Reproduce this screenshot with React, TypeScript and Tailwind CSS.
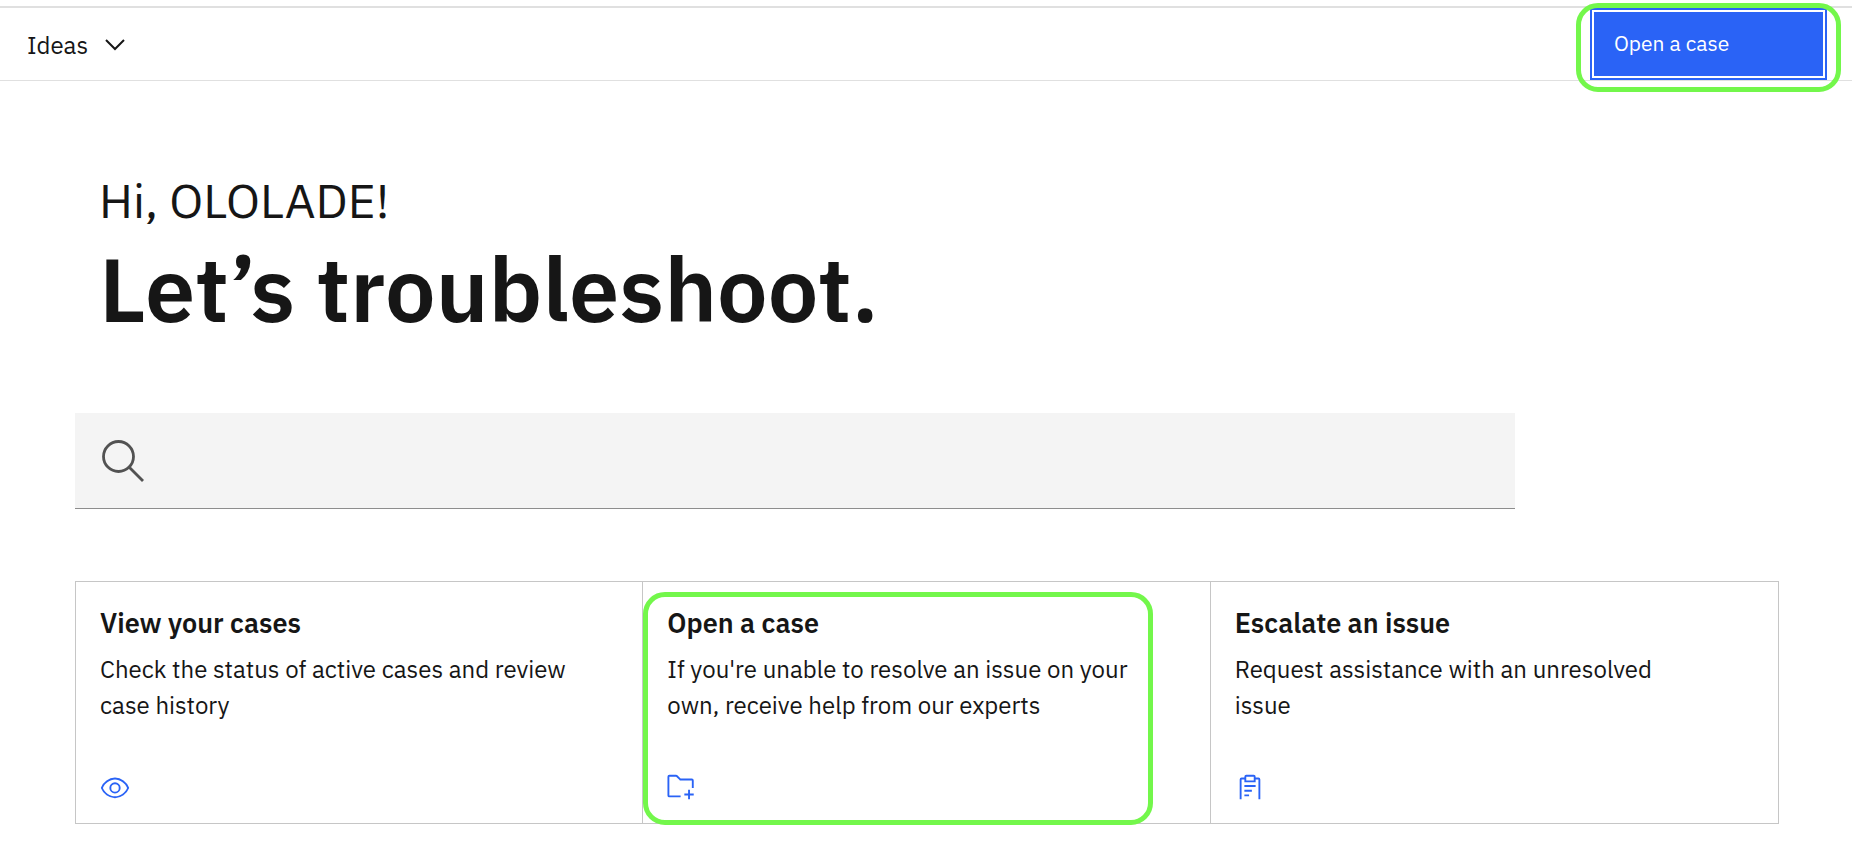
import type { ReactNode } from 'react';

function CardIcon({ viewBox, children }: { viewBox: string; children: ReactNode }) {
  return (
    <svg viewBox={viewBox} className="size-[30px] fill-[#2a63f6]" aria-hidden="true">
      {children}
    </svg>
  );
}

const viewIcon = (
  <CardIcon viewBox="0 -2 32 32">
    <path d="M30.94,15.66A16.69,16.69,0,0,0,16,5,16.69,16.69,0,0,0,1.06,15.66a1,1,0,0,0,0,.68A16.69,16.69,0,0,0,16,27,16.69,16.69,0,0,0,30.94,16.34,1,1,0,0,0,30.94,15.66ZM16,25c-5.3,0-10.9-3.93-12.93-9C5.1,10.93,10.7,7,16,7s10.9,3.93,12.93,9C26.9,21.07,21.3,25,16,25Z" />
    <path d="M16,10a6,6,0,1,0,6,6A6,6,0,0,0,16,10Zm0,10a4,4,0,1,1,4-4A4,4,0,0,1,16,20Z" />
  </CardIcon>
);

const folderAddIcon = (
  <CardIcon viewBox="1.5 0 32 32">
    <path d="M26,20H24v4H20v2h4v4h2V26h4V24H26Z" />
    <path d="M28,8H16L12.6,4.6A2,2,0,0,0,11.2,4H4A2,2,0,0,0,2,6V26a2,2,0,0,0,2,2H16V26H4V6h7.2l3.4,3.4.6.6H28v8h2V10A2,2,0,0,0,28,8Z" />
  </CardIcon>
);

const reportIcon = (
  <CardIcon viewBox="0 -2 32 32">
    <path d="M10,13H22v2H10Zm0,5h8v2H10Zm0,5h5v2H10Z" />
    <path d="M25,5H22V4a2,2,0,0,0-2-2H12a2,2,0,0,0-2,2V5H7A2,2,0,0,0,5,7V28H7V7h3v3H22V7h3V28h2V7A2,2,0,0,0,25,5ZM12,4h8V8H12Z" />
  </CardIcon>
);

const cards = [
  {
    title: 'View your cases',
    text: 'Check the status of active cases and review case history',
    icon: viewIcon,
    marked: false,
  },
  {
    title: 'Open a case',
    text: "If you're unable to resolve an issue on your own, receive help from our experts",
    icon: folderAddIcon,
    marked: true,
  },
  {
    title: 'Escalate an issue',
    text: 'Request assistance with an unresolved issue',
    icon: reportIcon,
    marked: false,
  },
];

export default function App() {
  return (
    <div className="bg-white pt-1.5 pb-5 font-['IBM_Plex_Sans',Roboto,sans-serif] text-[#161616] antialiased">
      <header className="flex h-[75px] items-center justify-between border-t-2 border-b border-[#e0e0e0] pr-[25px] pl-[27px]">
        <button type="button" className="flex items-center gap-[17px] pt-0.5 text-2xl">
          Ideas
          <svg viewBox="0 0 20 12" className="h-3 w-5 fill-none stroke-current stroke-2" aria-hidden="true">
            <path d="M1 1L10 10L19 1" />
          </svg>
        </button>
        <div className="relative">
          <button
            type="button"
            className="block h-[72px] w-[237px] border-2 border-[#2a63f6] bg-[#2a63f6] pl-[22px] text-left text-[21px] text-white inset-ring-2 inset-ring-white"
          >
            Open a case
          </button>
          <span className="pointer-events-none absolute -top-[5px] -right-[14px] -bottom-3 -left-[14px] rounded-[22px] border-[5px] border-[#73f74b]" />
        </div>
      </header>

      <main className="pr-[73px] pl-[75px]">
        <h1 className="pt-[89px] pl-6">
          <span className="block text-5xl leading-[60px]">Hi, OLOLADE!</span>
          <span className="block text-[90px] leading-[118px] font-semibold">Let’s troubleshoot.</span>
        </h1>

        <label className="mt-[65px] flex h-24 w-full max-w-[1440px] items-center gap-4 border-b border-[#8d8d8d] bg-[#f4f4f4] px-[27px]">
          <svg viewBox="0 0 42 42" className="size-[42px] fill-none stroke-[#525252] stroke-[2.8]" aria-hidden="true">
            <circle cx="16.5" cy="16.5" r="15" />
            <path d="M27 27L41 41" />
          </svg>
          <input type="search" aria-label="Search" className="h-full flex-1 bg-transparent text-2xl outline-none" />
        </label>

        <ul className="mt-18 grid grid-cols-3 border border-[#c6c6c6]">
          {cards.map((card) => (
            <li key={card.title} className="relative border-r border-[#c6c6c6] last:border-r-0">
              <a href="#" className="flex h-[241px] flex-col pt-[23px] pr-[70px] pb-[22px] pl-6">
                <h2 className="text-[27px] leading-9 font-semibold">{card.title}</h2>
                <p className="mt-2.5 text-2xl leading-9">{card.text}</p>
                <span className="mt-auto">{card.icon}</span>
              </a>
              {card.marked && (
                <span className="pointer-events-none absolute top-2.5 right-[57px] -bottom-0.5 left-0 rounded-[22px] border-[5px] border-[#73f74b]" />
              )}
            </li>
          ))}
        </ul>
      </main>
    </div>
  );
}
